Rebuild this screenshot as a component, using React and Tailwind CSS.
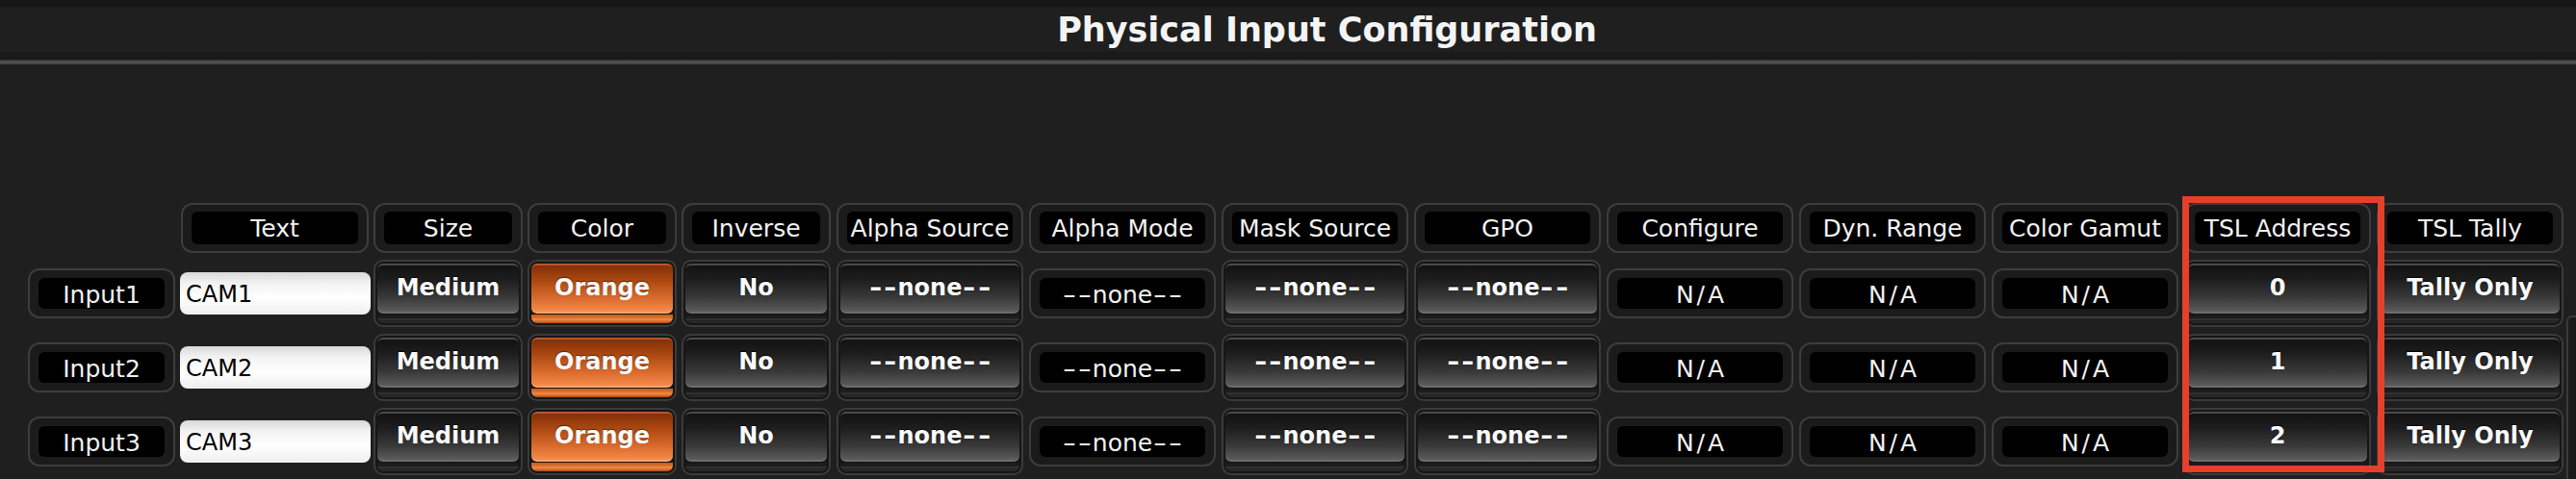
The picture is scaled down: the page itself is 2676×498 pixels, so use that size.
import React from 'react';

const FONT = "font-['DejaVu_Sans','Liberation_Sans',sans-serif]";

const rows = [
  { label: 'Input1', text: 'CAM1', tsl: '0' },
  { label: 'Input2', text: 'CAM2', tsl: '1' },
  { label: 'Input3', text: 'CAM3', tsl: '2' },
];

const heads = [
  { title: 'Text', w: 'ml-[1px] w-[195px]' },
  { title: 'Size', w: 'w-[155px]' },
  { title: 'Color', w: 'w-[155px]' },
  { title: 'Inverse', w: 'w-[155px]' },
  { title: 'Alpha Source', w: 'w-[194px]' },
  { title: 'Alpha Mode', w: 'w-[194px]' },
  { title: 'Mask Source', w: 'w-[194px]' },
  { title: 'GPO', w: 'w-[194px]' },
  { title: 'Configure', w: 'w-[194px]' },
  { title: 'Dyn. Range', w: 'w-[194px]' },
  { title: 'Color Gamut', w: 'w-[194px]' },
  { title: 'TSL Address', w: 'w-[194px]' },
  { title: 'TSL Tally', w: 'w-[194px]' },
];

const Frame = ({ w, py, children }) => (
  <div className={`${w} rounded-[12px] border-2 border-[#3d3d3d] bg-[#1b1b1b] px-[9px] ${py}`}>
    {children}
  </div>
);

const Header = ({ w, children }) => (
  <Frame w={w} py="py-[7px]">
    <div className="h-[34px] rounded-[6px] bg-black flex items-center justify-center text-[25px] leading-none text-[#f2f2f2] whitespace-nowrap">
      {children}
    </div>
  </Frame>
);

const Readout = ({ w, children }) => (
  <Frame w={w} py="py-[8px]">
    <div className="h-[32px] rounded-[6px] bg-black flex items-center justify-center text-[25px] leading-none text-[#f2f2f2] pt-[2px] whitespace-nowrap">
      {children}
    </div>
  </Frame>
);

const Button = ({ w, orange, children }) => (
  <div className={`${w} h-[70px] rounded-[10px] border-2 border-[#3b3b3b] bg-[#161616] p-[2px] flex flex-col`}>
    <div
      className={
        orange
          ? 'h-[52px] rounded-[6px] border-t-2 border-[#b8582a] border-b-2 border-b-[#f8a46e] bg-[linear-gradient(to_bottom,#82300a_0%,#a8460f_30%,#d86a2c_70%,#f58c4c_100%)] flex items-center justify-center pb-[3px] text-[24px] leading-none font-bold text-[#fafafa] whitespace-nowrap [text-shadow:0_-1px_1px_rgba(0,0,0,0.5)]'
          : 'h-[52px] rounded-[6px] border-t-2 border-[#4a4a4a] border-b-2 border-b-[#6c6c6c] bg-[linear-gradient(to_bottom,#121212_0%,#1d1d1d_30%,#393939_70%,#5c5c5c_100%)] flex items-center justify-center pb-[3px] text-[24px] leading-none font-bold text-[#fafafa] whitespace-nowrap [text-shadow:0_-1px_1px_#000]'
      }
    >
      {children}
    </div>
    <div
      className={
        orange
          ? 'flex-1 mt-[1px] rounded-b-[6px] bg-[linear-gradient(to_bottom,#c65816_0%,#e47630_45%,#f09050_55%,#b44a10_100%)]'
          : 'flex-1 mt-[1px] rounded-b-[6px] bg-[linear-gradient(to_bottom,#1a1a1a_0%,#1e1e1e_45%,#3e3e3e_55%,#222222_70%,#2c2c2c_100%)]'
      }
    />
  </div>
);

// Lucida-style long hyphens: each "-" stays a real character, stretched sideways
const Dash = ({ bold }) => (
  <span className={`inline-block text-center ${bold ? 'w-[15.5px] scale-x-[1.35]' : 'w-[16px] scale-x-[1.6]'}`}>-</span>
);

const None = ({ bold }) => (
  <span className="whitespace-nowrap">
    <Dash bold={bold} />
    <Dash bold={bold} />
    none
    <Dash bold={bold} />
    <Dash bold={bold} />
  </span>
);

const NA = () => <span className="whitespace-nowrap tracking-[3px] -mr-[3px]">N/A</span>;

const Cell = ({ children }) => <div className="flex items-center">{children}</div>;

export default function App() {
  return (
    <div className={`relative w-[2676px] h-[498px] overflow-hidden bg-[#1f1f1f] ${FONT}`}>
      <div className="h-[8px] bg-[#161616] border-b border-[#1c1c1c]" />
      <div className="h-[46px] pl-[81px] flex items-center justify-center">
        <h1 className="text-[35px] leading-none font-bold text-[#f4f4f4]">Physical Input Configuration</h1>
      </div>
      <div className="h-[8px] bg-[#1a1a1a]" />
      <div className="h-[5px] bg-[linear-gradient(to_bottom,#2e2e2e,#555555,#3a3a3a)]" />

      <div className="mt-[144px] ml-[29px] grid grid-cols-[158px_201px_160px_160px_161px_repeat(9,200px)] grid-rows-[52px_70px_70px_70px] gap-y-[7px]">
        <div />
        {heads.map((h) => (
          <Cell key={h.title}>
            <Header w={h.w}>{h.title}</Header>
          </Cell>
        ))}

        {rows.map((r) => (
          <React.Fragment key={r.label}>
            <Cell>
              <Readout w="w-[153px]">{r.label}</Readout>
            </Cell>
            <Cell>
              <div className="w-[198px] h-[44px] rounded-[8px] bg-[linear-gradient(to_bottom,#d8d8d8_0%,#f2f2f2_25%,#ffffff_60%,#eeeeee_100%)] flex items-center pl-[6px] pt-[2px] text-[24px] leading-none text-black">
                {r.text}
              </div>
            </Cell>
            <Cell>
              <Button w="w-[155px]">Medium</Button>
            </Cell>
            <Cell>
              <Button w="w-[155px]" orange>Orange</Button>
            </Cell>
            <Cell>
              <Button w="w-[155px]">No</Button>
            </Cell>
            <Cell>
              <Button w="w-[194px]"><None bold /></Button>
            </Cell>
            <Cell>
              <Readout w="w-[194px]"><None /></Readout>
            </Cell>
            <Cell>
              <Button w="w-[194px]"><None bold /></Button>
            </Cell>
            <Cell>
              <Button w="w-[194px]"><None bold /></Button>
            </Cell>
            <Cell>
              <Readout w="w-[194px]"><NA /></Readout>
            </Cell>
            <Cell>
              <Readout w="w-[194px]"><NA /></Readout>
            </Cell>
            <Cell>
              <Readout w="w-[194px]"><NA /></Readout>
            </Cell>
            <Cell>
              <Button w="w-[194px]">{r.tsl}</Button>
            </Cell>
            <Cell>
              <Button w="w-[194px]">Tally Only</Button>
            </Cell>
          </React.Fragment>
        ))}
      </div>

      {/* highlight around the TSL Address column */}
      <div className="absolute left-[2267px] top-[204px] w-[210px] h-[287px] border-[7px] border-[#e5402c]" />

      {/* edge of the neighbouring panel */}
      <div className="absolute left-[2666px] top-[328px] w-[20px] h-[180px] rounded-tl-[6px] border-l-2 border-t-2 border-[#3a3a3a] bg-[#1a1a1a]" />
    </div>
  );
}
